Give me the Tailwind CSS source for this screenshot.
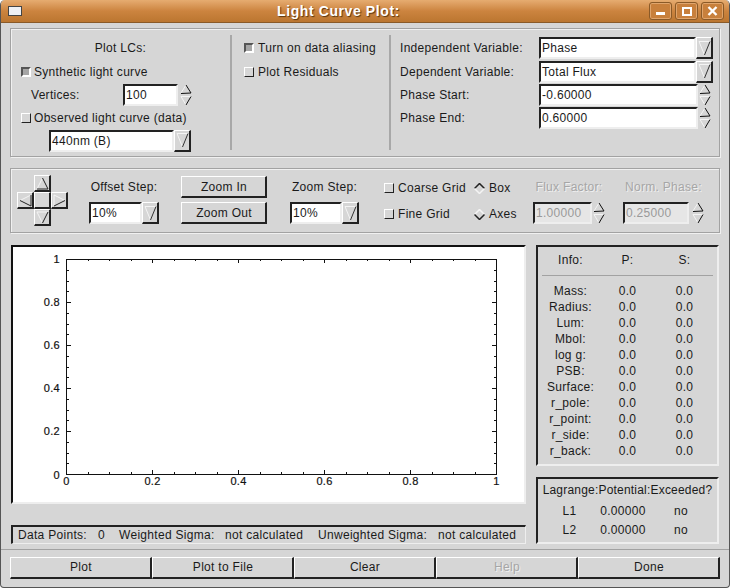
<!DOCTYPE html>
<html lang="en">
  <head>
    <meta charset="UTF-8" />
    <title>Light Curve Plot:</title>
    <script src="https://cdn.jsdelivr.net/npm/@tailwindcss/browser@4"></script>
  </head>
  <body class="m-0 overflow-hidden">
    <svg class="hidden">
      <symbol id="spin" viewBox="0 0 12 22">
        <path d="M6 1 L1 9" stroke="#f4f4f4" fill="none" />
        <path d="M6 1 L11 9 L1 9.5" stroke="#111" fill="none" />
        <path d="M1 12.5 H11 M1 12.5 L6 21" stroke="#f4f4f4" fill="none" />
        <path d="M11 12.5 L6 21" stroke="#111" fill="none" />
      </symbol>
      <symbol id="down" viewBox="0 0 13 18">
        <path d="M1 2.5 H12 M1 2.5 L6.5 16" stroke="#f4f4f4" fill="none" />
        <path d="M12 2.5 L6.5 16" stroke="#333" fill="none" />
      </symbol>
    </svg>

    <div class="relative w-[730px] h-[588px] flex flex-col overflow-hidden rounded-t-[5px] rounded-b-[4px] border-x border-b border-[#555] bg-[#d6d6d6] font-['Liberation_Sans',Arial,sans-serif] text-[12px] leading-none tracking-[0.3px] text-[#1a1a1a]">
      <!-- title bar -->
      <div class="h-[23px] shrink-0 flex items-center bg-gradient-to-b from-[#e6ac70] via-[#cc843f] to-[#bb7630] border-b border-[#8a5a28]">
        <div class="ml-[7px] w-[14px] h-[10px] bg-[#eef0f4] border border-[#444]"></div>
        <div class="ml-[255px] text-[14px] font-bold tracking-[0.6px] text-white [text-shadow:1px_1px_1px_#5a3510]">Light Curve Plot:</div>
        <div class="ml-auto mr-[5px] flex gap-[3px]">
          <div class="w-[23px] h-[18px] rounded-[3px] border border-[#8a5a28] bg-[#c8803c] shadow-[inset_0_0_0_1px_#e0a56c] flex items-end justify-center pb-[4px]"><div class="w-[9px] h-[3px] bg-white"></div></div>
          <div class="w-[23px] h-[18px] rounded-[3px] border border-[#8a5a28] bg-[#c8803c] shadow-[inset_0_0_0_1px_#e0a56c] flex items-center justify-center"><div class="w-[10px] h-[9px] border-2 border-white"></div></div>
          <div class="w-[23px] h-[18px] rounded-[3px] border border-[#8a5a28] bg-[#c8803c] shadow-[inset_0_0_0_1px_#e0a56c] flex items-center justify-center">
            <svg width="11" height="10" viewBox="0 0 11 10"><path d="M1.5 1 L9.5 9 M9.5 1 L1.5 9" stroke="white" stroke-width="2.4" /></svg>
          </div>
        </div>
      </div>

      <div class="flex-1 pl-[9px] pt-[5px]">
        <!-- top panel -->
        <div class="w-[710px] h-[129px] flex border border-[#a2a2a2] shadow-[1px_1px_0_#f0f0f0,inset_1px_1px_0_#f0f0f0]">
          <div class="w-[221px] pt-[1px] border-r-2 border-r-[#a8a8a8] my-[6px]">
            <div class="h-[24px] flex items-center justify-center">Plot LCs:</div>
            <div class="h-[23px] flex items-center pl-[10px]">
              <div class="w-[10px] h-[10px] border-2 border-t-[#555] border-l-[#555] border-r-white border-b-white bg-[#a6a6a6]"></div>
              <span class="ml-[3px]">Synthetic light curve</span>
            </div>
            <div class="h-[23px] flex items-center pl-[20px]">
              <span class="w-[92px]">Vertices:</span>
              <div class="w-[55px] h-[22px] pl-[1px] flex items-center bg-white border-2 border-t-[#222] border-l-[#222] border-r-[#eee] border-b-[#eee]">100</div>
              <svg class="ml-[2px]" width="12" height="22"><use href="#spin" /></svg>
            </div>
            <div class="h-[23px] flex items-center pl-[10px]">
              <div class="w-[10px] h-[10px] border border-t-white border-l-white border-r-[#222] border-b-[#222]"></div>
              <span class="ml-[3px]">Observed light curve (data)</span>
            </div>
            <div class="h-[23px] flex items-center pl-[38px]">
              <div class="w-[125px] h-[22px] pl-[1px] flex items-center bg-white border-2 border-t-[#222] border-l-[#222] border-r-[#eee] border-b-[#eee]">440nm (B)</div>
              <div class="w-[17px] h-[22px] flex items-center justify-center border border-t-white border-l-white border-r-2 border-b-2 border-r-[#222] border-b-[#222]"><svg width="13" height="18"><use href="#down" /></svg></div>
            </div>
          </div>

          <div class="w-[159px] pt-[1px] pl-[12px] border-r-2 border-r-[#a8a8a8] my-[6px]">
            <div class="h-[24px] flex items-center">
              <div class="w-[10px] h-[10px] border-2 border-t-[#555] border-l-[#555] border-r-white border-b-white bg-[#a6a6a6]"></div>
              <span class="ml-[4px]">Turn on data aliasing</span>
            </div>
            <div class="h-[24px] flex items-center">
              <div class="w-[10px] h-[10px] border border-t-white border-l-white border-r-[#222] border-b-[#222]"></div>
              <span class="ml-[4px]">Plot Residuals</span>
            </div>
          </div>

          <div class="flex-1 pl-[9px] pt-[7px]">
            <div class="h-[24px] flex items-center">
              <span class="w-[139px]">Independent Variable:</span>
              <div class="w-[157px] h-[22px] pl-[1px] flex items-center bg-white border-2 border-t-[#222] border-l-[#222] border-r-[#eee] border-b-[#eee]">Phase</div>
              <div class="w-[17px] h-[22px] flex items-center justify-center border border-t-white border-l-white border-r-2 border-b-2 border-r-[#222] border-b-[#222]"><svg width="13" height="18"><use href="#down" /></svg></div>
            </div>
            <div class="h-[23px] flex items-center">
              <span class="w-[139px]">Dependent Variable:</span>
              <div class="w-[157px] h-[22px] pl-[1px] flex items-center bg-white border-2 border-t-[#222] border-l-[#222] border-r-[#eee] border-b-[#eee]">Total Flux</div>
              <div class="w-[17px] h-[22px] flex items-center justify-center border border-t-white border-l-white border-r-2 border-b-2 border-r-[#222] border-b-[#222]"><svg width="13" height="18"><use href="#down" /></svg></div>
            </div>
            <div class="h-[23px] flex items-center">
              <span class="w-[139px]">Phase Start:</span>
              <div class="w-[159px] h-[22px] pl-[1px] flex items-center bg-white border-2 border-t-[#222] border-l-[#222] border-r-[#eee] border-b-[#eee]">-0.60000</div>
              <svg class="ml-[1px]" width="12" height="22"><use href="#spin" /></svg>
            </div>
            <div class="h-[23px] flex items-center">
              <span class="w-[139px]">Phase End:</span>
              <div class="w-[159px] h-[22px] pl-[1px] flex items-center bg-white border-2 border-t-[#222] border-l-[#222] border-r-[#eee] border-b-[#eee]">0.60000</div>
              <svg class="ml-[1px]" width="12" height="22"><use href="#spin" /></svg>
            </div>
          </div>
        </div>

        <!-- plot controls -->
        <div class="mt-[11px] w-[710px] h-[65px] flex border border-[#a2a2a2] shadow-[1px_1px_0_#f0f0f0,inset_1px_1px_0_#f0f0f0]">
          <div class="ml-[6px] mt-[6px] grid grid-cols-[17px_17px_17px] grid-rows-[17px_17px_17px] w-[51px] h-[51px]">
            <div class="col-start-2 flex items-center justify-center border border-t-white border-l-white border-r-2 border-b-2 border-r-[#222] border-b-[#222]">
              <svg width="13" height="13"><path d="M6.5 1 L1 12" stroke="#f4f4f4" fill="none" /><path d="M6.5 1 L12 12 H1" stroke="#222" fill="none" /></svg>
            </div>
            <div class="col-start-1 row-start-2 flex items-center justify-center border border-t-white border-l-white border-r-2 border-b-2 border-r-[#222] border-b-[#222]">
              <svg width="13" height="13"><path d="M1 6.5 L12 1" stroke="#f4f4f4" fill="none" /><path d="M1 6.5 L12 12 V1" stroke="#222" fill="none" /></svg>
            </div>
            <div class="col-start-2 row-start-2 border border-t-white border-l-white border-r-2 border-b-2 border-r-[#222] border-b-[#222]"></div>
            <div class="col-start-3 row-start-2 flex items-center justify-center border border-t-white border-l-white border-r-2 border-b-2 border-r-[#222] border-b-[#222]">
              <svg width="13" height="13"><path d="M1 12 V1 L12 6.5" stroke="#f4f4f4" fill="none" /><path d="M12 6.5 L1 12" stroke="#222" fill="none" /></svg>
            </div>
            <div class="col-start-2 row-start-3 flex items-center justify-center border border-t-white border-l-white border-r-2 border-b-2 border-r-[#222] border-b-[#222]">
              <svg width="13" height="13"><path d="M1 1 H12 M1 1 L6.5 12" stroke="#f4f4f4" fill="none" /><path d="M12 1 L6.5 12" stroke="#222" fill="none" /></svg>
            </div>
          </div>

          <div class="ml-[21px] w-[70px] pt-[6px] flex flex-col">
            <div class="h-[24px] flex items-center justify-center whitespace-nowrap">Offset Step:</div>
            <div class="mt-[3px] flex">
              <div class="w-[53px] h-[22px] pl-[1px] flex items-center bg-white border-2 border-t-[#222] border-l-[#222] border-r-[#eee] border-b-[#eee]">10%</div>
              <div class="w-[17px] h-[22px] flex items-center justify-center border border-t-white border-l-white border-r-2 border-b-2 border-r-[#222] border-b-[#222]"><svg width="13" height="18"><use href="#down" /></svg></div>
            </div>
          </div>

          <div class="ml-[22px] w-[86px] pt-[7px] flex flex-col gap-[4px]">
            <div class="h-[22px] pt-[1px] pl-[1px] flex items-center justify-center border border-t-white border-l-white border-r-2 border-b-2 border-r-[#222] border-b-[#222]">Zoom In</div>
            <div class="h-[22px] pt-[1px] pl-[1px] flex items-center justify-center border border-t-white border-l-white border-r-2 border-b-2 border-r-[#222] border-b-[#222]">Zoom Out</div>
          </div>

          <div class="ml-[23px] w-[69px] pt-[6px] flex flex-col">
            <div class="h-[24px] flex items-center justify-center whitespace-nowrap">Zoom Step:</div>
            <div class="mt-[3px] flex">
              <div class="w-[52px] h-[22px] pl-[1px] flex items-center bg-white border-2 border-t-[#222] border-l-[#222] border-r-[#eee] border-b-[#eee]">10%</div>
              <div class="w-[17px] h-[22px] flex items-center justify-center border border-t-white border-l-white border-r-2 border-b-2 border-r-[#222] border-b-[#222]"><svg width="13" height="18"><use href="#down" /></svg></div>
            </div>
          </div>

          <div class="ml-[25px] w-[90px] pt-[7px]">
            <div class="h-[24px] flex items-center">
              <div class="w-[10px] h-[10px] border border-t-white border-l-white border-r-[#222] border-b-[#222]"></div>
              <span class="ml-[4px] whitespace-nowrap">Coarse Grid</span>
            </div>
            <div class="mt-[2px] h-[24px] flex items-center">
              <div class="w-[10px] h-[10px] border border-t-white border-l-white border-r-[#222] border-b-[#222]"></div>
              <span class="ml-[4px] whitespace-nowrap">Fine Grid</span>
            </div>
          </div>

          <div class="w-[59px] pt-[7px]">
            <div class="h-[24px] flex items-center">
              <svg width="11" height="11"><path d="M0.5 5.5 L5.5 0.5 L10.5 5.5" stroke="#222" stroke-width="1.5" fill="none" /><path d="M0.5 5.5 L5.5 10.5 L10.5 5.5" stroke="#f4f4f4" stroke-width="1.5" fill="none" /></svg>
              <span class="ml-[4px]">Box</span>
            </div>
            <div class="mt-[2px] h-[24px] flex items-center">
              <svg width="11" height="11"><path d="M0.5 5.5 L5.5 0.5 L10.5 5.5" stroke="#f4f4f4" stroke-width="1.5" fill="none" /><path d="M0.5 5.5 L5.5 10.5 L10.5 5.5" stroke="#222" stroke-width="1.5" fill="none" /></svg>
              <span class="ml-[4px]">Axes</span>
            </div>
          </div>

          <div class="w-[90px] pt-[6px]">
            <div class="h-[24px] w-[72px] flex items-center justify-center whitespace-nowrap text-[#a6a6a6] [text-shadow:1px_1px_0_#f0f0f0]">Flux Factor:</div>
            <div class="mt-[3px] flex">
              <div class="w-[59px] h-[22px] pl-[1px] flex items-center text-[#999] bg-[#e6e6e6] border-2 border-t-[#222] border-l-[#222] border-r-[#eee] border-b-[#eee]">1.00000</div>
              <svg class="ml-[1px]" width="12" height="22"><use href="#spin" /></svg>
            </div>
          </div>

          <div class="w-[81px] pt-[6px]">
            <div class="h-[24px] flex items-center justify-center whitespace-nowrap text-[#a6a6a6] [text-shadow:1px_1px_0_#f0f0f0]">Norm. Phase:</div>
            <div class="mt-[3px] flex">
              <div class="w-[66px] h-[22px] pl-[1px] flex items-center text-[#999] bg-[#e6e6e6] border-2 border-t-[#222] border-l-[#222] border-r-[#eee] border-b-[#eee]">0.25000</div>
              <svg class="ml-[3px]" width="12" height="22"><use href="#spin" /></svg>
            </div>
          </div>
        </div>

        <div class="mt-[12px] flex">
          <!-- plot and status line -->
          <div class="ml-[1px] w-[515px]">
            <div class="h-[259px] bg-white border-2 border-t-[#111] border-l-[#111] border-r-[#eee] border-b-[#eee]">
              <svg id="plot" class="block -mt-[2px] -ml-[2px]" width="515" height="259" viewBox="11 245 515 259" font-family="Liberation Sans" font-size="11" fill="#111" stroke="#111" stroke-width="0.2">
                <rect x="66.5" y="259.5" width="430" height="215" fill="none" stroke="#111" stroke-width="1" />
                <path id="ticks" fill="none" stroke="#111" stroke-width="1" />
                <g text-anchor="end">
                  <text x="60" y="263">1</text>
                  <text x="60" y="306">0.8</text>
                  <text x="60" y="349">0.6</text>
                  <text x="60" y="392">0.4</text>
                  <text x="60" y="435">0.2</text>
                  <text x="60" y="479">0</text>
                </g>
                <g text-anchor="middle">
                  <text x="66.5" y="485">0</text>
                  <text x="152.5" y="485">0.2</text>
                  <text x="238.5" y="485">0.4</text>
                  <text x="324.5" y="485">0.6</text>
                  <text x="410.5" y="485">0.8</text>
                  <text x="496.5" y="485">1</text>
                </g>
              </svg>
            </div>
            <div class="mt-[21px] h-[19px] pb-[1px] flex items-center bg-[#d6d6d6] border border-t-2 border-l-2 border-t-[#222] border-l-[#222] border-r-[#eee] border-b-[#eee] whitespace-nowrap">
              <span class="ml-[5px] w-[80px]">Data Points:</span>
              <span class="w-[21px]">0</span>
              <span class="w-[106px]">Weighted Sigma:</span>
              <span class="w-[93px]">not calculated</span>
              <span class="w-[120px]">Unweighted Sigma:</span>
              <span>not calculated</span>
            </div>
          </div>

          <div class="ml-[10px] w-[183px]">
            <!-- info table -->
            <div class="h-[221px] px-[4px] border-2 border-t-[#222] border-l-[#222] border-r-[#eee] border-b-[#eee]">
              <div class="h-[25px] mb-[3px] grid grid-cols-3 items-center text-center"><span>Info:</span><span>P:</span><span>S:</span></div>
              <div class="h-[2px] border-t border-[#a2a2a2] border-b-white"></div>
              <div class="mt-[6px] grid grid-cols-3 auto-rows-[16px] items-center text-center">
                <span>Mass:</span><span>0.0</span><span>0.0</span>
                <span>Radius:</span><span>0.0</span><span>0.0</span>
                <span>Lum:</span><span>0.0</span><span>0.0</span>
                <span>Mbol:</span><span>0.0</span><span>0.0</span>
                <span>log g:</span><span>0.0</span><span>0.0</span>
                <span>PSB:</span><span>0.0</span><span>0.0</span>
                <span>Surface:</span><span>0.0</span><span>0.0</span>
                <span>r_pole:</span><span>0.0</span><span>0.0</span>
                <span>r_point:</span><span>0.0</span><span>0.0</span>
                <span>r_side:</span><span>0.0</span><span>0.0</span>
                <span>r_back:</span><span>0.0</span><span>0.0</span>
              </div>
            </div>
            <!-- lagrange table -->
            <div class="mt-[11px] h-[67px] border-2 border-t-[#222] border-l-[#222] border-r-[#eee] border-b-[#eee]">
              <div class="h-[22px] flex items-center justify-center whitespace-nowrap tracking-[0.2px]">Lagrange:Potential:Exceeded?</div>
              <div class="grid grid-cols-[63px_44px_72px] auto-rows-[19px] items-center justify-items-center whitespace-nowrap">
                <span>L1</span><span>0.00000</span><span>no</span>
                <span>L2</span><span>0.00000</span><span>no</span>
              </div>
            </div>
          </div>
        </div>

        <div class="mt-[5px] -ml-[9px] h-[2px] w-[728px] border-t border-[#a2a2a2] border-b-white"></div>

        <!-- bottom buttons -->
        <div class="mt-[6px] w-[710px] h-[22px] grid grid-cols-5">
          <div class="pl-[1px] pb-[1px] flex items-center justify-center border border-t-white border-l-white border-r-2 border-b-2 border-r-[#222] border-b-[#222]">Plot</div>
          <div class="pl-[1px] pb-[1px] flex items-center justify-center border border-t-white border-l-white border-r-2 border-b-2 border-r-[#222] border-b-[#222]">Plot to File</div>
          <div class="pl-[1px] pb-[1px] flex items-center justify-center border border-t-white border-l-white border-r-2 border-b-2 border-r-[#222] border-b-[#222]">Clear</div>
          <div class="pl-[1px] pb-[1px] flex items-center justify-center border border-t-white border-l-white border-r-2 border-b-2 border-r-[#222] border-b-[#222] text-[#a6a6a6] [text-shadow:1px_1px_0_#f0f0f0]">Help</div>
          <div class="pl-[1px] pb-[1px] flex items-center justify-center border border-t-white border-l-white border-r-2 border-b-2 border-r-[#222] border-b-[#222]">Done</div>
        </div>
      </div>
    </div>

    <script>
      // axis ticks: 20 divisions per side, every 4th is a major tick
      let d = "";
      for (let i = 1; i < 20; i++) {
        const len = i % 4 === 0 ? 4 : 2;
        const x = Math.floor(66.5 + 21.5 * i) + 0.5;
        const y = Math.floor(259.5 + 10.75 * i) + 0.5;
        d += `M${x} 259 v${len} M${x} 474 v${-len} `;
        d += `M66 ${y} h${len + 1} M497 ${y} h${-len - 1} `;
      }
      document.getElementById("ticks").setAttribute("d", d);
    </script>
  </body>
</html>
